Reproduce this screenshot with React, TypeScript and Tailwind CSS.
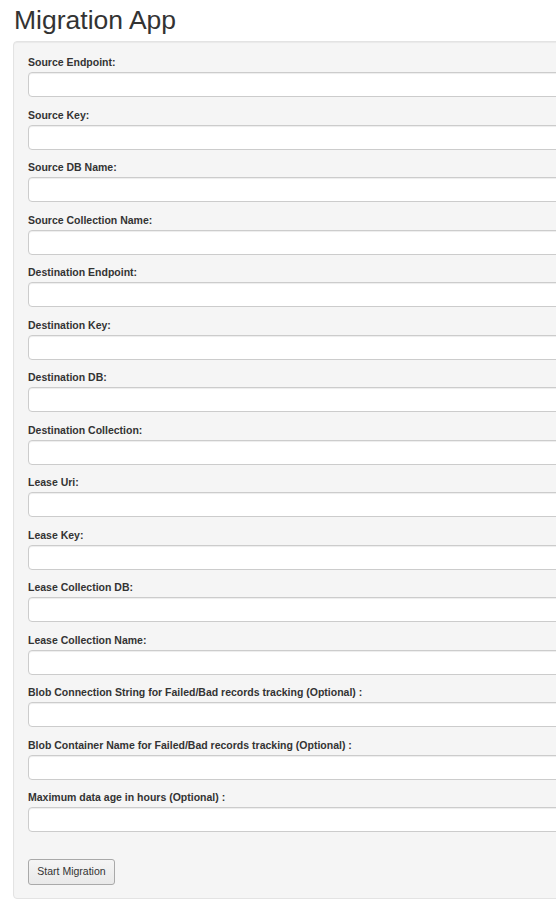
import React from 'react';

const fields = [
  'Source Endpoint:',
  'Source Key:',
  'Source DB Name:',
  'Source Collection Name:',
  'Destination Endpoint:',
  'Destination Key:',
  'Destination DB:',
  'Destination Collection:',
  'Lease Uri:',
  'Lease Key:',
  'Lease Collection DB:',
  'Lease Collection Name:',
  'Blob Connection String for Failed/Bad records tracking (Optional) :',
  'Blob Container Name for Failed/Bad records tracking (Optional) :',
  'Maximum data age in hours (Optional) :',
];

const App: React.FC = () => {
  return (
    <div className="w-[556px] h-[915px] overflow-hidden bg-white font-['Liberation_Sans',Arial,sans-serif] text-[#333]">
      <div className="w-[640px] pl-[13px]">
        <h1 className="mt-[6px] mb-[6px] pl-[1px] text-[26.5px] leading-[29px] font-normal text-[#333]">Migration App</h1>

        {/* well */}
        <div className="bg-[#f5f5f5] border border-[#e3e3e3] rounded-[4px] pt-[13px] pb-[13px] px-[14px] shadow-[inset_0_1px_1px_rgba(0,0,0,0.05)]">
          <form onSubmit={(e) => e.preventDefault()}>
            {fields.map((f) => (
              <div key={f} className="mb-[10.5px]">
                <label className="block text-[10.5px] leading-[15px] font-bold mb-[2px]">{f}</label>
                <input
                  type="text"
                  className="block w-full h-[25px] bg-white border border-[#ccc] rounded-[4px] px-2 text-[11px] shadow-[inset_0_1px_1px_rgba(0,0,0,0.075)] outline-none"
                />
              </div>
            ))}
            <button
              type="submit"
              className="mt-[16.5px] w-[87px] h-[26px] text-[10.5px] text-[#333] bg-gradient-to-b from-[#f5f5f5] to-[#e9e9e9] border border-[#a9a9a9] rounded-[3px]"
            >
              Start Migration
            </button>
          </form>
        </div>
      </div>
    </div>
  );
};

export default App;
